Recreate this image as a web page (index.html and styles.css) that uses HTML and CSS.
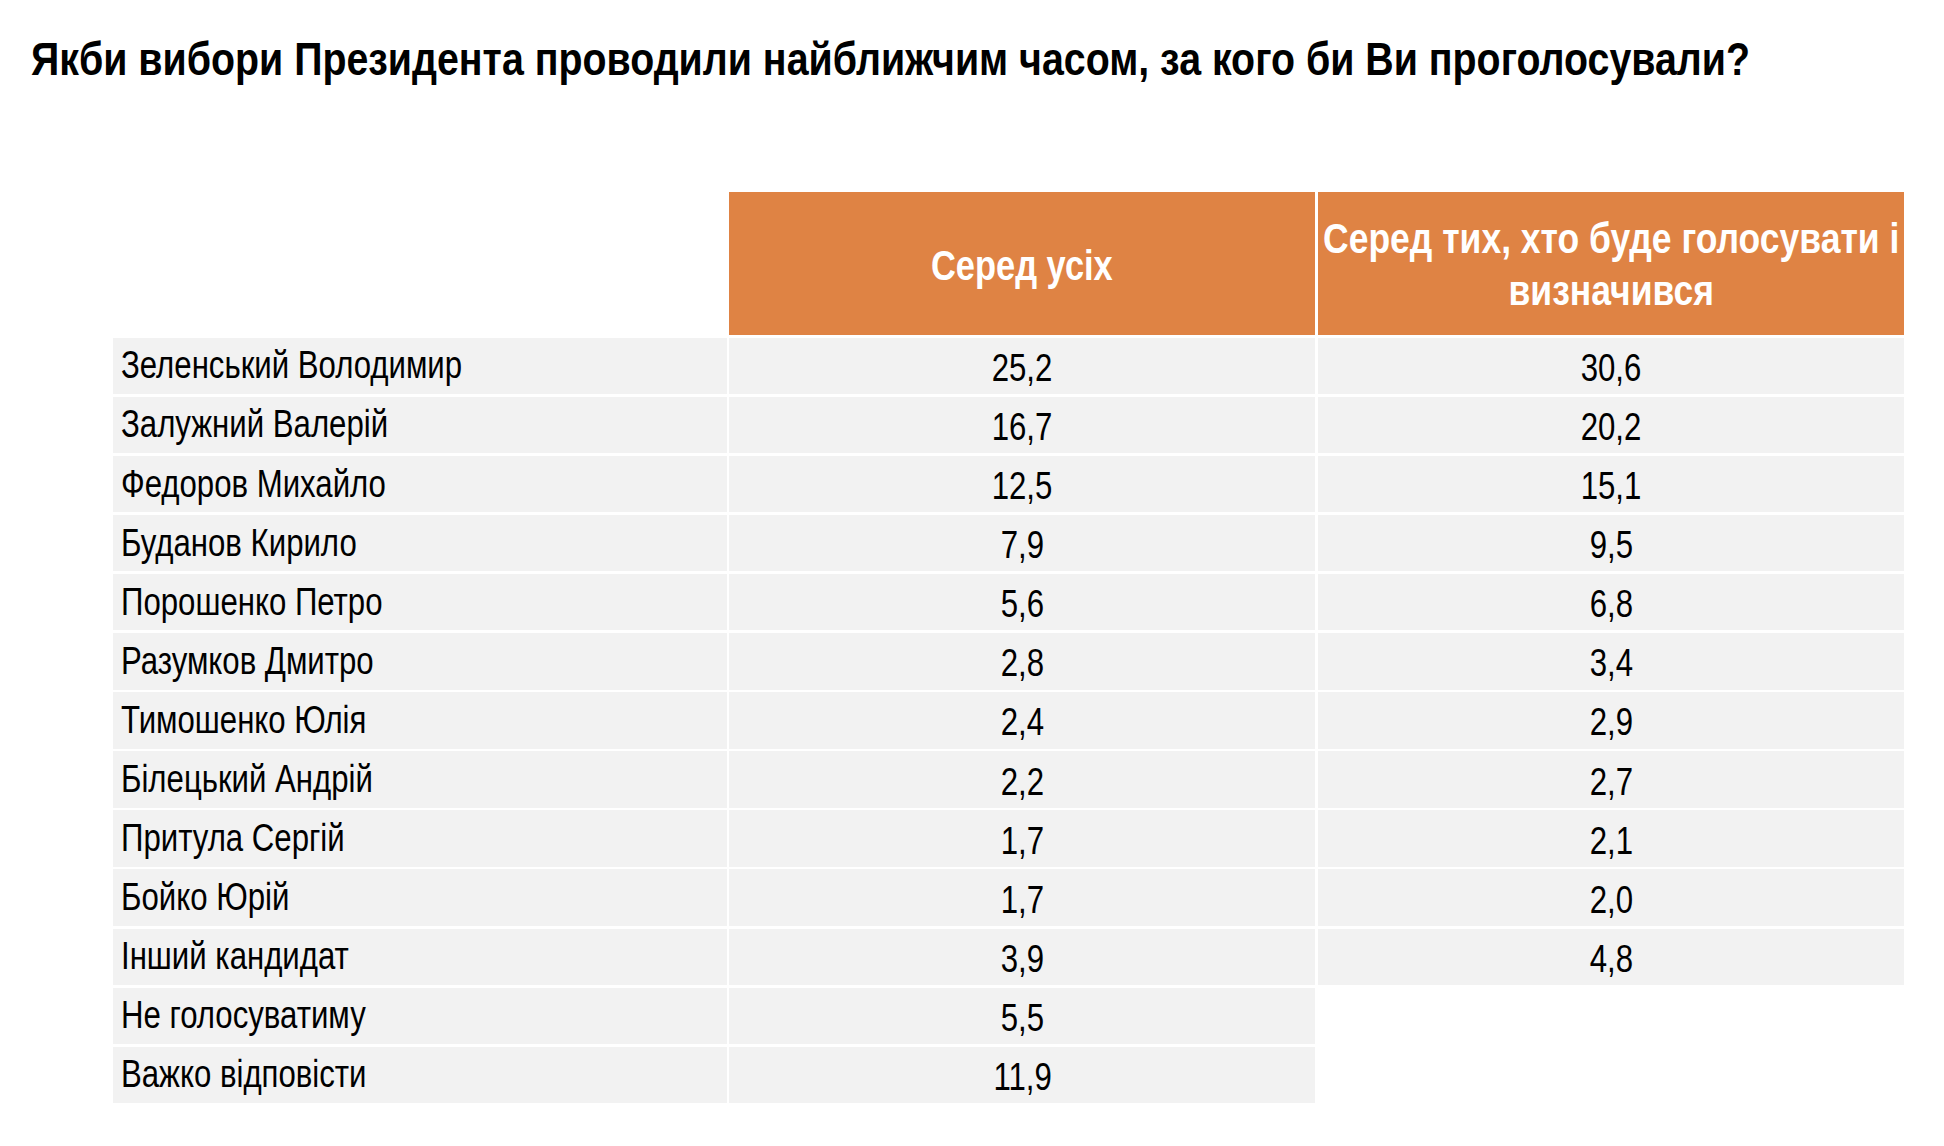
FILE: index.html
```html
<!DOCTYPE html>
<html lang="uk">
<head>
<meta charset="utf-8">
<title>Опитування</title>
<link rel="stylesheet" href="styles.css">
</head>
<body>
<h1 class="title"><span class="tl">Якби вибори Президента проводили найближчим часом, за кого би Ви проголосували?</span></h1>
<div class="grid">
  <div class="blank"></div>
  <div class="head"><span class="nc">Серед усіх</span></div>
  <div class="head"><span class="wrap">Серед тих, хто буде голосувати і визначився</span></div>

  <div class="name"><span class="nl">Зеленський Володимир</span></div><div class="num"><span class="nc">25,2</span></div><div class="num"><span class="nc">30,6</span></div>
  <div class="name"><span class="nl">Залужний Валерій</span></div><div class="num"><span class="nc">16,7</span></div><div class="num"><span class="nc">20,2</span></div>
  <div class="name"><span class="nl">Федоров Михайло</span></div><div class="num"><span class="nc">12,5</span></div><div class="num"><span class="nc">15,1</span></div>
  <div class="name"><span class="nl">Буданов Кирило</span></div><div class="num"><span class="nc">7,9</span></div><div class="num"><span class="nc">9,5</span></div>
  <div class="name"><span class="nl">Порошенко Петро</span></div><div class="num"><span class="nc">5,6</span></div><div class="num"><span class="nc">6,8</span></div>
  <div class="name"><span class="nl">Разумков Дмитро</span></div><div class="num"><span class="nc">2,8</span></div><div class="num"><span class="nc">3,4</span></div>
  <div class="name"><span class="nl">Тимошенко Юлія</span></div><div class="num"><span class="nc">2,4</span></div><div class="num"><span class="nc">2,9</span></div>
  <div class="name"><span class="nl">Білецький Андрій</span></div><div class="num"><span class="nc">2,2</span></div><div class="num"><span class="nc">2,7</span></div>
  <div class="name"><span class="nl">Притула Сергій</span></div><div class="num"><span class="nc">1,7</span></div><div class="num"><span class="nc">2,1</span></div>
  <div class="name"><span class="nl">Бойко Юрій</span></div><div class="num"><span class="nc">1,7</span></div><div class="num"><span class="nc">2,0</span></div>
  <div class="name"><span class="nl">Інший кандидат</span></div><div class="num"><span class="nc">3,9</span></div><div class="num"><span class="nc">4,8</span></div>
  <div class="name"><span class="nl">Не голосуватиму</span></div><div class="num"><span class="nc">5,5</span></div><div class="empty"></div>
  <div class="name"><span class="nl">Важко відповісти</span></div><div class="num"><span class="nc">11,9</span></div><div class="empty"></div>
</div>
</body>
</html>
```
FILE: styles.css
```css
html, body {
  margin: 0;
  padding: 0;
  background: #ffffff;
}
body {
  font-family: "Liberation Sans", Arial, sans-serif;
  color: #000000;
}
.nl, .nc {
  display: inline-block;
  white-space: nowrap;
  transform: scaleX(0.82);
}
.nl { transform-origin: left center; }
.nc { transform-origin: center center; }
.title {
  margin: 32px 0 0 31px;
  font-size: 39.33px;
  line-height: 54px;
  font-weight: bold;
  white-space: nowrap;
}
.title .tl {
  display: inline-block;
  transform: scaleY(1.1696);
  transform-origin: left center;
}
.grid {
  margin: 106px 0 0 113px;
  display: grid;
  grid-template-columns: 613.7px 586.2px 586.6px;
  grid-template-rows: 143px repeat(13, 56.5px);
  column-gap: 2.5px;
  row-gap: 2.6px;
}
.head {
  background: #df8344;
  color: #ffffff;
  font-weight: bold;
  font-size: 42px;
  line-height: 52px;
  display: flex;
  align-items: center;
  justify-content: center;
  text-align: center;
  padding-top: 4px;
  overflow: hidden;
}
.head .wrap {
  display: block;
  width: 583px;
  font-size: 35.49px;
  line-height: 43.94px;
  transform: scaleY(1.1834);
  transform-origin: center center;
}
.name, .num {
  background: #f2f2f2;
  font-size: 38px;
  display: flex;
  align-items: center;
}
.name {
  padding-left: 8px;
}
.num {
  justify-content: center;
  padding-top: 5px;
}
```
